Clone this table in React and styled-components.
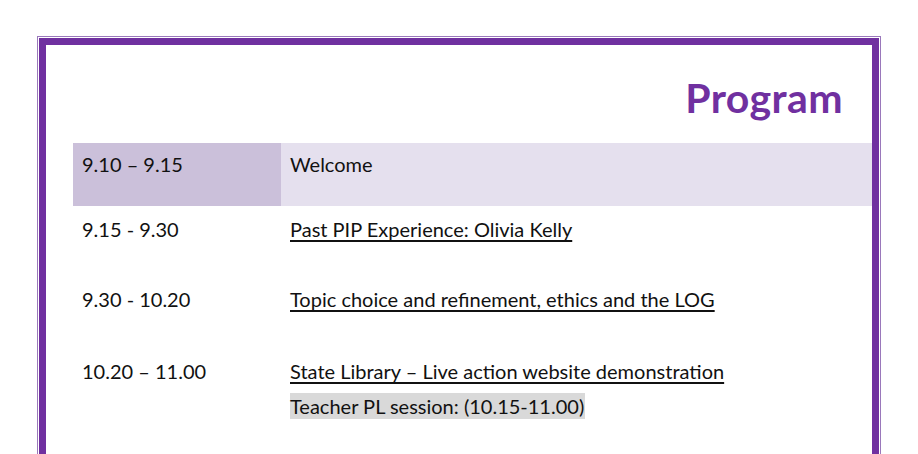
import React from "react";
import styled, { createGlobalStyle } from "styled-components";

const GlobalStyle = createGlobalStyle`
  html, body {
    margin: 0;
    padding: 0;
    background: #fff;
    overflow: hidden;
  }

  body {
    font-family: Lato, "Open Sans", sans-serif;
    color: #111;
  }
`;

const Page = styled.div`
  padding: 36px 0 0 37px;
`;

const Frame = styled.div`
  width: 840px;
  min-height: 460px;
  border: 1px solid #9a78bb;
  padding: 1px;
`;

const Sheet = styled.div`
  border: 7px solid #7030a0;
  min-height: 460px;
  padding-left: 27px;
`;

const Title = styled.h1`
  margin: 28px 29px 0 0;
  text-align: right;
  font-size: 41px;
  letter-spacing: 0.4px;
  line-height: 1.2;
  font-weight: 700;
  color: #7030a0;
`;

const Schedule = styled.div`
  margin-top: 21px;
  display: grid;
  grid-template-columns: 208px 1fr;
`;

const Cell = styled.div`
  background: ${(p) => p.$bg || "transparent"};
  height: ${(p) => p.$h}px;
  padding: ${(p) => p.$pt}px 0 0 9px;
  box-sizing: border-box;
  font-size: 20px;
  line-height: 26px;
`;

const Linked = styled.span`
  text-decoration: underline;
  text-underline-offset: 3px;
  text-decoration-thickness: 1.5px;
`;

const Note = styled.div`
  margin-top: 9px;
`;

const Highlight = styled.span`
  display: inline-block;
  background: #d9d9d9;
  line-height: 26px;
  padding-right: 1px;
`;

const rows = [
  {
    time: "9.10 – 9.15",
    h: 63,
    pt: 8,
    timeBg: "#cbc0da",
    bg: "#e5e0ee",
    item: "Welcome",
  },
  {
    time: "9.15 - 9.30",
    h: 70,
    pt: 10,
    item: <Linked>Past PIP Experience: Olivia Kelly</Linked>,
  },
  {
    time: "9.30 - 10.20",
    h: 72,
    pt: 10,
    item: <Linked>Topic choice and refinement, ethics and the LOG</Linked>,
  },
  {
    time: "10.20 – 11.00",
    h: 104,
    pt: 10,
    item: (
      <>
        <Linked>State Library – Live action website demonstration</Linked>
        <Note>
          <Highlight>Teacher PL session: (10.15-11.00)</Highlight>
        </Note>
      </>
    ),
  },
];

export default function App() {
  return (
    <>
      <GlobalStyle />
      <Page>
        <Frame>
          <Sheet>
            <Title>Program</Title>
            <Schedule>
              {rows.map((r, i) => (
                <React.Fragment key={i}>
                  <Cell $bg={r.timeBg} $h={r.h} $pt={r.pt}>
                    {r.time}
                  </Cell>
                  <Cell $bg={r.bg} $h={r.h} $pt={r.pt}>
                    {r.item}
                  </Cell>
                </React.Fragment>
              ))}
            </Schedule>
          </Sheet>
        </Frame>
      </Page>
    </>
  );
}
